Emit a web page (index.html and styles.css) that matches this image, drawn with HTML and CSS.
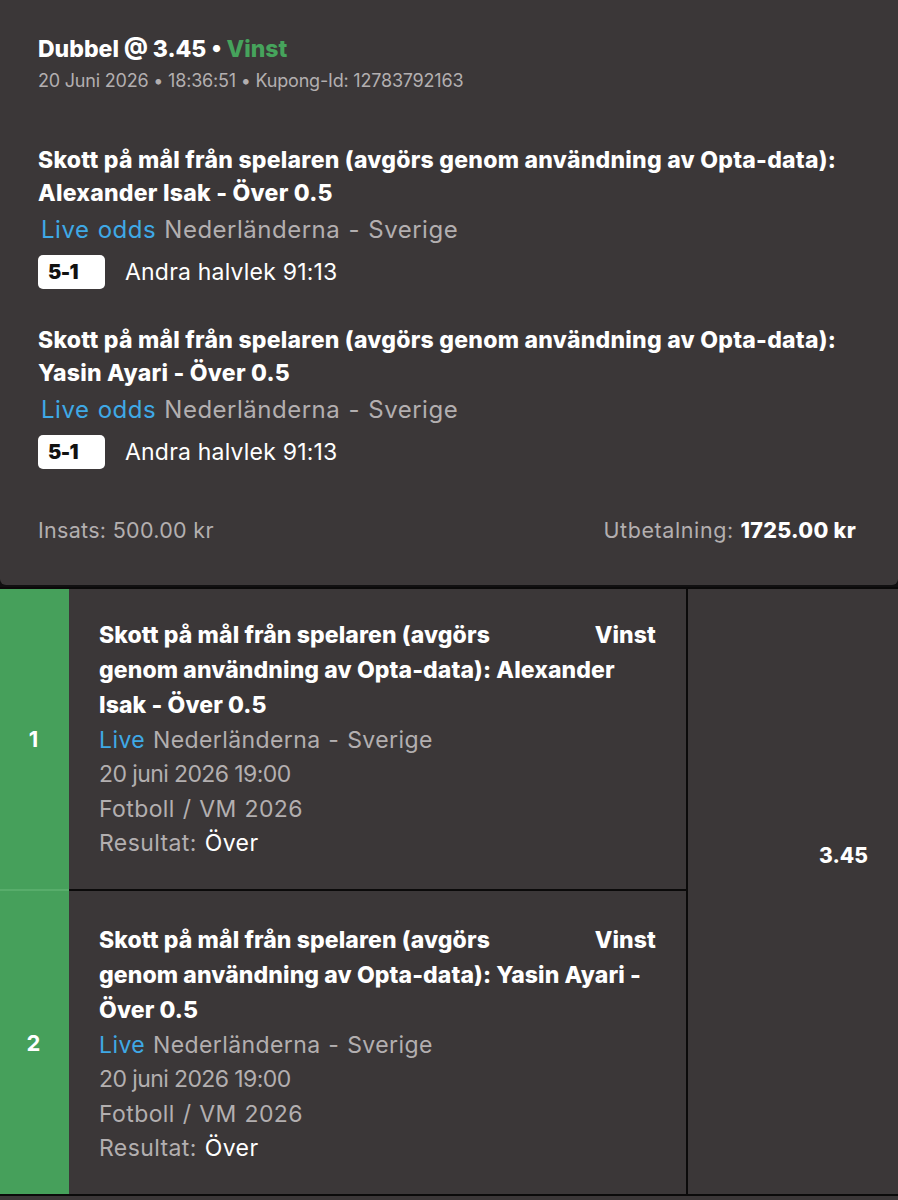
FILE: index.html
```html
<!DOCTYPE html>
<html lang="sv">
<head>
<meta charset="utf-8">
<title>Kupong</title>
<link rel="stylesheet" href="styles.css">
</head>
<body>
<div class="page">
  <section class="card">
    <header class="head">
      <div class="head-title">Dubbel @ 3.45 • <span class="win">Vinst</span></div>
      <div class="head-meta">20 Juni 2026 • 18:36:51 • Kupong-Id: 12783792163</div>
    </header>

    <div class="sel">
      <div class="sel-title">Skott på mål från spelaren (avgörs genom användning av Opta-data): Alexander Isak - Över 0.5</div>
      <div class="sel-event"><span class="live">Live odds</span> Nederländerna - Sverige</div>
      <div class="sel-score"><span class="badge">5-1</span><span class="period">Andra halvlek 91:13</span></div>
    </div>

    <div class="sel">
      <div class="sel-title">Skott på mål från spelaren (avgörs genom användning av Opta-data): Yasin Ayari - Över 0.5</div>
      <div class="sel-event"><span class="live">Live odds</span> Nederländerna - Sverige</div>
      <div class="sel-score"><span class="badge">5-1</span><span class="period">Andra halvlek 91:13</span></div>
    </div>

    <div class="totals">
      <div class="stake">Insats: 500.00 kr</div>
      <div class="payout">Utbetalning: <strong>1725.00 kr</strong></div>
    </div>
  </section>

  <section class="legs">
    <div class="num num-first">1</div>
    <div class="leg leg-first">
      <div class="leg-head">
        <span class="leg-title">Skott på mål från spelaren (avgörs</span>
        <span class="leg-status">Vinst</span>
      </div>
      <div class="leg-title">genom användning av Opta-data): Alexander Isak - Över 0.5</div>
      <div class="leg-line"><span class="live">Live</span> Nederländerna - Sverige</div>
      <div class="leg-line leg-date">20 juni 2026 19:00</div>
      <div class="leg-line">Fotboll / VM 2026</div>
      <div class="leg-line">Resultat: <span class="res">Över</span></div>
    </div>
    <div class="odds">3.45</div>

    <div class="num">2</div>
    <div class="leg leg-second">
      <div class="leg-head">
        <span class="leg-title">Skott på mål från spelaren (avgörs</span>
        <span class="leg-status">Vinst</span>
      </div>
      <div class="leg-title">genom användning av Opta-data): Yasin Ayari - Över 0.5</div>
      <div class="leg-line"><span class="live">Live</span> Nederländerna - Sverige</div>
      <div class="leg-line leg-date">20 juni 2026 19:00</div>
      <div class="leg-line">Fotboll / VM 2026</div>
      <div class="leg-line">Resultat: <span class="res">Över</span></div>
    </div>
  </section>
  <div class="tail"></div>
</div>
</body>
</html>
```

FILE: styles.css
```css
* { box-sizing: border-box; }

html, body {
  margin: 0;
  padding: 0;
  background: #111011;
}

body {
  font-family: Inter, "Noto Sans", sans-serif;
  color: #ffffff;
  width: 898px;
  font-variant-numeric: proportional-nums;
}

.page {
  display: flex;
  flex-direction: column;
  gap: 3px;
}

.card {
  background: #3b3738;
  border-radius: 0 0 6px 6px;
  padding: 35px 40px 0 38px;
  height: 585px;
  display: flex;
  flex-direction: column;
}

.head-title {
  font-size: 23px;
  font-weight: 800;
  letter-spacing: 0;
  line-height: 28px;
}

.win { color: #46a35c; }

.head-meta {
  font-size: 18px;
  color: #b3afb0;
  letter-spacing: -0.2px;
  line-height: 24px;
  margin-top: 6px;
}

.sel {
  margin-top: 51px;
}

.sel + .sel { margin-top: 35px; }

.sel-title {
  font-size: 23px;
  font-weight: 800;
  letter-spacing: 0.25px;
  line-height: 33px;
}

.sel-event {
  font-size: 24px;
  color: #b3afb0;
  letter-spacing: 0.5px;
  word-spacing: 1px;
  line-height: 30px;
  margin-top: 5px;
  padding-left: 3px;
}

.live { color: #3fa9e6; }

.sel-score {
  display: flex;
  align-items: center;
  gap: 20px;
  margin-top: 10px;
}

.badge {
  background: #ffffff;
  color: #111;
  border-radius: 5px;
  width: 67px;
  height: 34px;
  font-size: 20px;
  font-weight: 900;
  letter-spacing: -0.6px;
  padding-left: 10px;
  display: flex;
  align-items: center;
}

.period {
  font-size: 23px;
  letter-spacing: 0.2px;
}

.totals {
  display: flex;
  justify-content: space-between;
  align-items: center;
  margin-top: 48px;
  font-size: 21.5px;
  line-height: 26px;
  color: #b3afb0;
  letter-spacing: 0.3px;
  padding-right: 2px;
}

.payout {
  letter-spacing: 0.6px;
}

.payout strong {
  color: #fff;
  font-weight: 800;
  letter-spacing: 0.3px;
}

.legs {
  display: grid;
  grid-template-columns: 69px 619px 210px;
  grid-template-rows: 302px 303px;
  border-top: 2px solid #0b0a0a;
  border-bottom: 2px solid #0b0a0a;
  background: #3b3738;
  margin-top: -1px;
}

.num {
  background: #46a05b;
  display: flex;
  align-items: center;
  justify-content: center;
  font-size: 22px;
  font-weight: 700;
  padding-right: 2px;
}

.num-first {
  border-bottom: 2px solid #58ad6b;
}

.leg {
  border-right: 2px solid #0b0a0a;
  padding: 29px 30px 0 30px;
}

.leg-first {
  border-bottom: 2px solid #0b0a0a;
}

.leg-second {
  padding-top: 32px;
}

.leg-head {
  display: flex;
  justify-content: space-between;
  gap: 20px;
}

.leg-title,
.leg-status {
  font-size: 23px;
  font-weight: 800;
  letter-spacing: 0.1px;
  line-height: 35px;
}

.leg-line {
  font-size: 23px;
  color: #b3afb0;
  letter-spacing: 0.4px;
  word-spacing: 1px;
  line-height: 34.4px;
}

.leg-date {
  letter-spacing: -0.6px;
  word-spacing: 0;
}

.res { color: #fff; }

.odds {
  grid-column: 3;
  grid-row: 1 / span 2;
  display: flex;
  align-items: center;
  justify-content: flex-end;
  padding: 0 30px 72px 0;
  font-size: 21px;
  font-weight: 800;
  letter-spacing: 0;
}

.tail {
  background: #3b3738;
  height: 20px;
  margin-top: -3px;
}
```
